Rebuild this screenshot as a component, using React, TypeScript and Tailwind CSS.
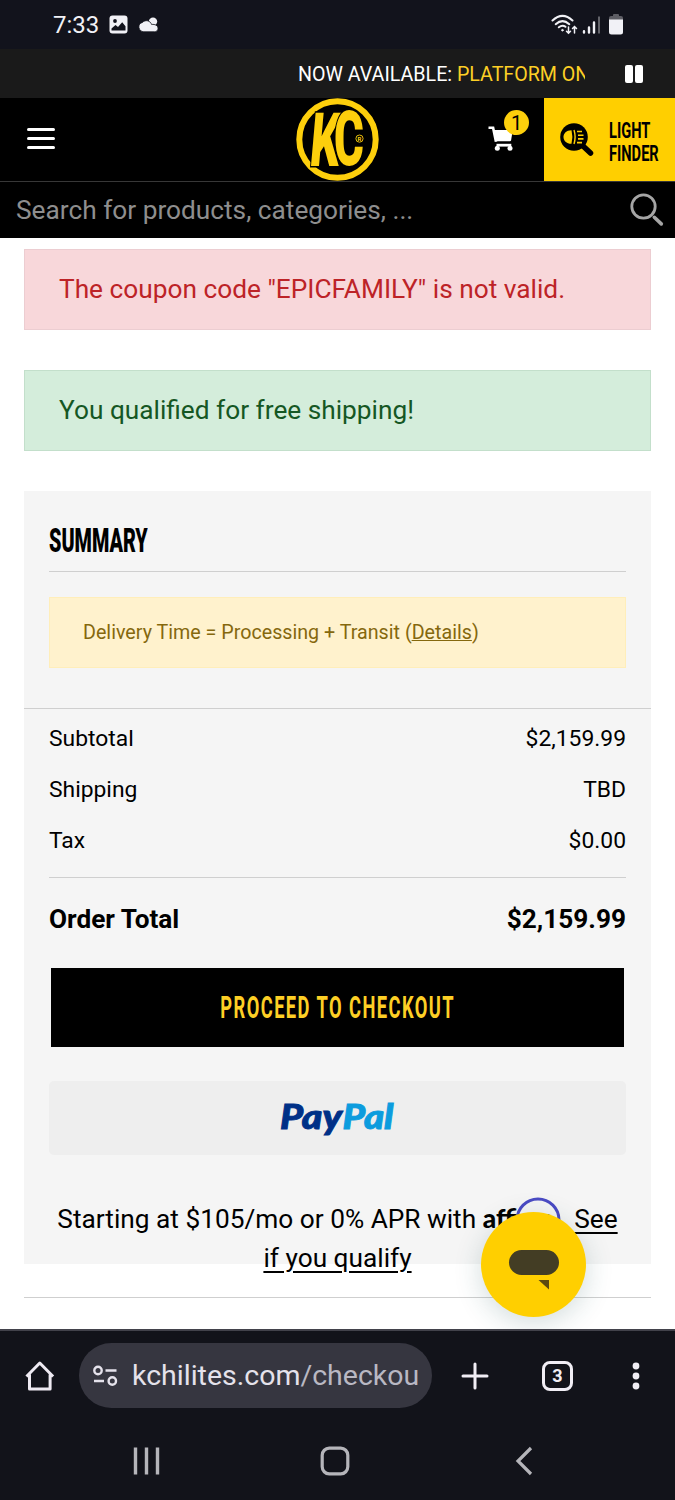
import React from 'react';

const rows = [
  { label: 'Subtotal', value: '$2,159.99' },
  { label: 'Shipping', value: 'TBD' },
  { label: 'Tax', value: '$0.00' },
];

const StatusBar = () => (
  <div className="flex h-[49px] items-center bg-[#12131c] pl-[53px] pr-[52px] text-[#f1f1f6]">
    <span className="w-[56px] text-[24px] leading-none">7:33</span>
    <svg width="19" height="19" viewBox="0 0 19 19">
      <rect x="0.5" y="0.5" width="18" height="18" rx="3" fill="#f1f1f6" />
      <circle cx="6" cy="6" r="1.9" fill="#12131c" />
      <path d="M2.5 15.5v-2l4-3.5 2.5 2 4.2-4.8 3.3 4v4.3z" fill="#12131c" />
    </svg>
    <svg className="ml-2.5" width="21" height="16" viewBox="0 0 21 16" fill="#f1f1f6">
      <circle cx="15" cy="4.6" r="4.2" />
      <path d="M5 14.8A4.8 4.8 0 0 1 4.5 5.4A5.4 5.4 0 0 1 13.6 7.5C17 7 20 8.5 20 11.4C20 13.4 18.5 14.8 16.5 14.8Z" stroke="#12131c" strokeWidth="0.8" />
    </svg>
    <div className="ml-auto flex items-center">
      <svg width="27" height="22" viewBox="0 0 27 22" fill="none" stroke="#f1f1f6" strokeLinecap="round">
        <path d="M1.5 6.5Q11.5 -2.8 21.5 6.5" strokeWidth="2" />
        <path d="M4.7 10.2Q11.5 4 18.3 10.2" strokeWidth="2" />
        <path d="M7.8 13.3Q11.5 10.3 14.5 12.8" strokeWidth="2" />
        <circle cx="11.4" cy="16.2" r="0.8" fill="#f1f1f6" />
        <path d="M17.5 13v6M15.5 17.3l2 2 2-2M23.5 19v-6.5M21.5 14.5l2-2 2 2" strokeWidth="1.5" />
      </svg>
      <svg className="ml-1" width="19" height="20" viewBox="0 0 19 20" strokeWidth="2.4" strokeLinecap="round">
        <path d="M2 17.5v-1.3M7 17.5v-5M12 17.5v-10" stroke="#f1f1f6" />
        <path d="M17 18.5v-17" stroke="#6c6c73" strokeWidth="1.8" strokeLinecap="butt" />
      </svg>
      <svg className="ml-2" width="14" height="21" viewBox="0 0 14 21">
        <path d="M0 6V4q0-2 2-2h2V1q0-1 1-1h4q1 0 1 1v1h2q2 0 2 2v2z" fill="#5d5d64" />
        <path d="M0 5.5h14V18q0 2.5-2.5 2.5h-9Q0 20.5 0 18z" fill="#f1f1f6" />
      </svg>
    </div>
  </div>
);

const Logo = () => (
  <svg className="absolute left-[296px] top-0 overflow-visible" width="83" height="83" viewBox="0 0 83 83" fill="#fdcf0c">
    <circle cx="41.5" cy="41.5" r="38.2" fill="#000" stroke="#fdcf0c" strokeWidth="6" />
    <g fontFamily="Roboto" fontWeight="900" stroke="#000" strokeWidth="3" paintOrder="stroke">
      <text transform="translate(12.5 68) skewX(-5) scale(0.62 1)" fontSize="75">K</text>
      <text transform="translate(38 67) scale(0.6 1)" fontSize="76">C</text>
    </g>
    <circle cx="63.5" cy="40.6" r="3.6" fill="#000" stroke="#fdcf0c" strokeWidth="0.9" />
    <text x="61.6" y="43" fontSize="6" fontFamily="Roboto" fontWeight="700">R</text>
  </svg>
);

const Header = () => (
  <header>
    <div className="flex h-[49px] items-center bg-[#1a1a1a]">
      <div className="ml-[298px] w-[287px] overflow-hidden whitespace-nowrap pt-[2px] text-[19.65px] text-white">
        NOW AVAILABLE: <span className="text-[#fdcf25]">PLATFORM ON</span>
      </div>
      <div className="ml-10 flex gap-[2px]">
        <span className="h-[18px] w-2 rounded-[2px] bg-white" />
        <span className="h-[18px] w-2 rounded-[2px] bg-white" />
      </div>
    </div>

    <div className="relative flex h-[84px] items-stretch border-b border-[#373737] bg-black">
      <div className="ml-[27px] mt-[30px] flex w-[28px] flex-col gap-[6px]">
        <span className="h-[3px] rounded-full bg-white" />
        <span className="h-[3px] rounded-full bg-white" />
        <span className="h-[3px] rounded-full bg-white" />
      </div>
      <Logo />
      <svg className="absolute left-[487px] top-[27px]" width="28" height="27" viewBox="0 0 28 27" fill="#fff">
        <path d="M1.5 2.8h4.6L9 16.8" fill="none" stroke="#fff" strokeWidth="2.6" />
        <path d="M6.5 5h19.3l-1.7 10.2q-.2 1-1.2 1H8.8z" />
        <path d="M9.5 20.2h14.8" stroke="#fff" strokeWidth="2.8" />
        <circle cx="10.3" cy="23.2" r="2.5" />
        <circle cx="23" cy="23.2" r="2.5" />
      </svg>
      <span className="absolute left-[504px] top-[12px] flex size-[25px] items-center justify-center rounded-full bg-[#fdcf0c] text-[20px] leading-none text-black">
        1
      </span>
      <div className="ml-auto flex w-[131px] items-center bg-[#ffcf00] text-black">
        <svg className="ml-[15px] shrink-0" width="36" height="36" viewBox="0 0 36 36">
          <path d="M24 24l7.5 7" stroke="#000" strokeWidth="5.5" strokeLinecap="round" />
          <circle cx="15" cy="15" r="13.8" />
          <path d="M12.5 8.2C1.8 8.2 1.8 21.8 12.5 21.8Q14.3 15 12.5 8.2z" fill="#ffcf00" />
          <path d="M15 8q2.2 7 0 14" fill="none" stroke="#ffcf00" strokeWidth="1.4" />
          <path d="M18 9.5h5M19 13.2h5.5M19 16.9h5.5M18 20.6h5" stroke="#ffcf00" strokeWidth="1.6" />
        </svg>
        <div className="ml-[14px] mt-[5px] w-[60px] shrink-0 origin-left scale-x-[0.65] text-[22.5px] font-bold leading-[23px]">
          LIGHT
          <br />
          FINDER
        </div>
      </div>
    </div>

    <div className="flex h-[56px] items-center bg-black pl-4 pr-[11px]">
      <span className="text-[26.25px] leading-[38px] text-[#8e8e8e]">Search for products, categories, ...</span>
      <svg className="ml-auto" width="34" height="34" viewBox="0 0 34 34" fill="none" stroke="#a5a5a5">
        <circle cx="13.5" cy="13.5" r="11.7" strokeWidth="2.8" />
        <path d="M24.3 24.3l7 6.6" strokeWidth="3.6" strokeLinecap="round" />
      </svg>
    </div>
  </header>
);

const Summary = () => (
  <section className="mt-10 h-[773px] bg-[#f5f5f5] text-black">
    <div className="mx-[25px] h-[81px] border-b border-[#cfcfcf] pt-[30px]">
      <h2 className="w-max origin-left scale-x-[0.6] text-[33px] font-black leading-[39px]">SUMMARY</h2>
    </div>
    <div className="mx-[25px] mt-[25px] flex h-[71px] items-center border border-[#ffeeba] bg-[#fff2cd] pl-[33px] text-[19.7px] text-[#85680d]">
      <span>
        Delivery Time = Processing + Transit (<a className="underline">Details</a>)
      </span>
    </div>

    <div className="mt-10 border-t border-[#cfcfcf] px-[25px] pt-[5px]">
      {rows.map((row) => (
        <div key={row.label} className="flex h-[50.7px] items-center justify-between text-[22.85px]">
          <span>{row.label}</span>
          <span>{row.value}</span>
        </div>
      ))}
      <div className="mt-[11px] flex h-[84px] items-center justify-between border-t border-[#cfcfcf] text-[26.2px] font-bold">
        <span>Order Total</span>
        <span>{'$2,159.99'}</span>
      </div>

      <button className="mx-[2px] mt-[7px] flex h-[79px] w-[573px] items-center justify-center bg-black text-[#fdcf25]">
        <span className="scale-x-[0.6] whitespace-nowrap text-[30.5px] font-bold tracking-[2.4px]">PROCEED TO CHECKOUT</span>
      </button>
      <button className="mt-[34px] flex h-[74px] w-[577px] items-center justify-center rounded-[5px] bg-[#eeeeee]">
        <svg className="overflow-visible" width="120" height="60" viewBox="0 0 120 60" fontFamily="Lato" fontWeight="900" fontStyle="italic" fontSize="34" strokeWidth="0.9">
          <text x="2" y="41" fill="#003087" stroke="#003087" textLength="62" lengthAdjust="spacingAndGlyphs">Pay</text>
          <text x="64.5" y="41" fill="#0c9cde" stroke="#0c9cde" textLength="51" lengthAdjust="spacingAndGlyphs">Pal</text>
        </svg>
      </button>
    </div>

    <p className="mt-[44px] whitespace-nowrap text-center text-[26.25px] leading-[39px]">
      Starting at $105/mo or 0% APR with{' '}
      <span className="relative inline-block w-[85px] text-left font-['Lato'] font-black">
        affirm
        <svg className="absolute left-[31px] top-[-5px]" width="48" height="30" viewBox="0 0 48 30">
          <path d="M3 26A21 21 0 1 1 45 26" fill="none" stroke="#4a4ac4" strokeWidth="3" />
        </svg>
      </span>{' '}
      <a className="underline underline-offset-4">See</a>
      <br />
      <a className="underline underline-offset-4">if you qualify</a>
    </p>
  </section>
);

const ChatBubble = () => (
  <div className="absolute left-[481px] top-[1212px] size-[105px] rounded-full bg-[#ffcf00] shadow-[0_6px_28px_rgba(30,80,80,0.2)]">
    <svg width="105" height="105" viewBox="0 0 105 105" fill="#433d24">
      <rect x="28" y="38" width="50" height="25" rx="12.5" />
      <path d="M57.5 68H68v9.5z" fill="#5d4a0f" />
    </svg>
  </div>
);

const BrowserBar = () => (
  <div className="relative h-[171px] border-t-2 border-[#42424b] bg-[#12131a]">
    <div className="flex h-[89px] items-center">
      <svg className="ml-[24px]" width="32" height="32" viewBox="0 0 32 32" fill="none" stroke="#eeeaf2" strokeWidth="3">
        <path d="M2.5 16.5L15.8 3l13.3 13.5M5.5 14.5v14.5h20.6V14.5" strokeLinejoin="round" />
      </svg>
      <div className="ml-[23px] flex h-[65px] w-[353px] items-center rounded-full bg-[#363640]">
        <svg className="ml-[13px]" width="27" height="22" viewBox="0 0 27 22" fill="none" stroke="#e5e2eb" strokeWidth="2.4">
          <circle cx="6" cy="5.5" r="3.7" />
          <path d="M13.5 5.5h11M2 16h10" />
          <circle cx="20.3" cy="16" r="3.7" />
        </svg>
        <span className="ml-[13px] whitespace-nowrap pt-[2px] text-[28.5px] text-[#e5e2eb]">
          kchilites.com<span className="text-[#b9b8c3]">/checkou</span>
        </span>
      </div>
      <svg className="ml-[29px]" width="28" height="28" viewBox="0 0 28 28" stroke="#f1eef5" strokeWidth="3" strokeLinecap="round">
        <path d="M14 2v24M2 14h24" />
      </svg>
      <div className="ml-[53px] flex h-[30px] w-[31px] items-center justify-center rounded-[8px] border-[3px] border-[#f1eef5] text-[18px] font-bold leading-none text-[#f1eef5]">
        3
      </div>
      <svg className="ml-[59px]" width="8" height="28" viewBox="0 0 8 28" fill="#f1eef5">
        <circle cx="4" cy="4" r="3.4" />
        <circle cx="4" cy="14" r="3.4" />
        <circle cx="4" cy="24" r="3.4" />
      </svg>
    </div>
    <div className="flex h-[80px] items-center pt-[1px]">
      <svg className="ml-[132px]" width="30" height="30" viewBox="0 0 30 30" stroke="#b5b5ba" strokeWidth="3.4">
        <path d="M3.5 1.5v27M14.5 1.5v27M25.5 1.5v27" />
      </svg>
      <svg className="ml-[158px]" width="30" height="30" viewBox="0 0 30 30" fill="none" stroke="#b5b5ba" strokeWidth="3.2">
        <rect x="2.2" y="2.2" width="25.6" height="25.6" rx="7" />
      </svg>
      <svg className="ml-[165px]" width="18" height="30" viewBox="0 0 18 30" fill="none" stroke="#b5b5ba" strokeWidth="3.2">
        <path d="M16 2L3 15l13 13" />
      </svg>
    </div>
  </div>
);

export default function App() {
  return (
    <div className="relative flex h-[1500px] w-[675px] flex-col overflow-hidden bg-white font-['Roboto',sans-serif]">
      <StatusBar />
      <Header />
      <main className="flex-1 px-6 pt-[11px]">
        <div className="w-[627px]">
          <div className="flex h-[81px] items-center border border-[#eccdd1] bg-[#f8d7da] pl-[34px] text-[26.25px] text-[#bd2327]">
            The coupon code "EPICFAMILY" is not valid.
          </div>
          <div className="mt-10 flex h-[81px] items-center border border-[#c3dfcb] bg-[#d4eddb] pl-[34px] text-[26.25px] text-[#155724]">
            You qualified for free shipping!
          </div>
          <Summary />
          <div className="mt-[33px] border-t border-[#cfcfcf]" />
        </div>
      </main>
      <ChatBubble />
      <BrowserBar />
    </div>
  );
}
